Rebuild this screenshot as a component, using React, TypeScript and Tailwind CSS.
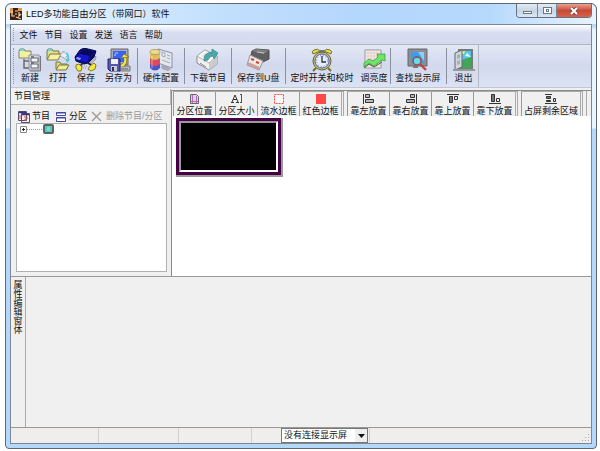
import React from 'react';

type Item = { label: string; icon: React.ReactNode; pad?: string; sep?: boolean };

const Svg = ({ children }: { children: React.ReactNode }) => (
  <svg className="w-6 h-6" viewBox="0 0 24 24" aria-hidden="true">{children}</svg>
);

const NewIcon = () => (
  <Svg>
    <path d="M1 3l1-2h4l1 2h6v7H1z" fill="#f3f1a4" stroke="#82825a" />
    <path d="M2 1h4v2H2z" fill="#67d7e4" />
    <path d="M6 11v9h5M6 13h5" fill="none" stroke="#666" strokeWidth="1.4" />
    <path d="M11 7h10v15H11z" fill="#d7dbea" stroke="#8c8f9c" />
    <path d="M13 10h7v4h-7zM13 16h7v4h-7z" fill="#f2f4fb" stroke="#666" />
    <path d="M13 9h3M13 15h3" stroke="#666" strokeWidth="1.4" />
    <path d="M22.5 8v15H12" fill="none" stroke="#777" />
  </Svg>
);

const OpenIcon = () => (
  <Svg>
    <path d="M1 11V3l1-2h4l1 2h6v3" fill="#e4e08a" stroke="#77774a" />
    <path d="M2 1h4v2H2z" fill="#67d7e4" />
    <path d="M1 12l3-6h11l-3 6z" fill="#f6f2a0" stroke="#77774a" />
    <path d="M10 21v-7h4l1 2h6v5z" fill="#dcd878" stroke="#77774a" />
    <path d="M10 22l3-5h10l-3 5z" fill="#f0ec90" stroke="#77774a" />
    <path d="M14 6l3-1V3l5 4-4 4-1-2h-2z" fill="#e8ecf4" stroke="#888" strokeWidth=".8" strokeDasharray="2 1" />
    <path d="M20 5q3 2 2 7" fill="none" stroke="#49c8dc" strokeWidth="1.6" />
    <path d="M19 11h5l-2.5 4z" fill="#49c8dc" />
  </Svg>
);

const SaveIcon = () => (
  <Svg>
    <path d="M15 14l7-6v3l-5 5z" fill="#b4b4c0" stroke="#888" strokeDasharray="1 1" />
    <path d="M1 9l5-7 4-2 12 3-2 6-6 6-4 1-8-3z" fill="#10109c" stroke="#04043c" />
    <path d="M7 3l3-2 11 3-5 4-10-2z" fill="#080858" />
    <path d="M3 9l3-3 9 2-2 6-11-3z" fill="#1717c8" />
    <path d="M16 8l5-3-2 5-5 4z" fill="#0b0b78" />
    <path d="M3 9l4 1-1 2-4-1z" fill="#86a8ff" />
    <path d="M9 15l-3 3M14 15l3 2" stroke="#222" strokeWidth="1.6" />
    <path d="M8 18h5M9 20h3" stroke="#999" strokeDasharray="1 1" />
    <path d="M2 17l3-1 3 3-1 4H4l-2-3z" fill="#f6ea3c" stroke="#5f5a22" strokeWidth=".8" />
    <path d="M14 21l2-3 4-3 2 2-1 4-4 2z" fill="#f6ea3c" stroke="#5f5a22" strokeWidth=".8" />
  </Svg>
);

const SaveAsIcon = () => (
  <Svg>
    <path d="M4 1h17v16H4z" fill="#a9acb6" stroke="#666" />
    <path d="M6 3h13v11H6z" fill="#3a62f4" />
    <path d="M8 5h3M7 7h2" stroke="#bcd7ff" />
    <path d="M12 18h11v5H12z" fill="#b9b9bd" stroke="#777" />
    <path d="M14 21h7" stroke="#666" />
    <path d="M1 11h12v12H3l-2-2z" fill="#5557b0" stroke="#262669" />
    <path d="M4 11h7v5H4z" fill="#eef0fa" />
    <path d="M4 18h6v5H4z" fill="#c9cbd8" />
    <path d="M5 19h2v4H5z" fill="#333" />
    <path d="M14 18q6-2 4-9" fill="none" stroke="#6e6a22" strokeWidth="3.4" />
    <path d="M14 18q6-2 4-9" fill="none" stroke="#f5e74c" strokeWidth="2.2" />
    <path d="M14 10l3-4 5 3z" fill="#f5e74c" stroke="#6e6a22" strokeWidth=".7" />
  </Svg>
);

const HardwareIcon = () => (
  <Svg>
    <path d="M9 1l14 4v15l-14-5z" fill="#e3e8ef" stroke="#8b90a0" />
    <path d="M13 4l3 1v4l-3-1zM18 7l3 1M18 10l3 1M13 12l8 3" fill="none" stroke="#a3abb9" />
    <path d="M1 5v15q5 5 10 0V5z" fill="#5053c8" />
    <path d="M1 9v7q5 4 10 0V9z" fill="#dd4a5e" />
    <path d="M1 4v6q5 4 10 0V4z" fill="#d8bf62" />
    <ellipse cx="6" cy="4" rx="5" ry="2.5" fill="#efdc84" stroke="#a08b50" strokeWidth=".7" />
    <path d="M3 8v12" stroke="#fff" strokeWidth="1.3" opacity=".35" />
    <path d="M12 18l3-1 7 4-3 2-6-2z" fill="#a8a5b4" />
  </Svg>
);

const DownloadIcon = () => (
  <Svg>
    <path d="M1 8l8-6 12 6v8l-8 6L1 15z" fill="#f0f0f0" stroke="#8d8d8d" />
    <path d="M1 8l8-6 12 6-8 7z" fill="#fcfcfc" stroke="#b0b0b0" />
    <path d="M5 8l5-4 7 4-5 4z" fill="#e2e2e2" />
    <path d="M13 15v7l8-6V8z" fill="#cbcbcb" />
    <path d="M4 15l6 4" stroke="#888" />
    <path d="M8 13q-1-8 8-9V1l6 4-4 6-1-3q-4 0-5 4z" fill="#47aaa9" stroke="#267c7f" strokeWidth=".6" />
  </Svg>
);

const UsbIcon = () => (
  <Svg>
    <path d="M6 3l4-2 13 1v9l-6 3L5 7z" fill="#5f5f62" stroke="#4b4b4d" />
    <path d="M6 3l4-2 13 1-5 4z" fill="#7d7d80" />
    <path d="M11 4l7 1" stroke="#c8c8c8" />
    <path d="M4 7l13 6-4 9-12-5z" fill="#ebe8e8" stroke="#9a9292" />
    <path d="M1 17l12 5 1-3-12-5z" fill="#c9a29c" />
    <path d="M5 11l3 1M10 14l3 1" stroke="#d4452d" strokeWidth="2" />
  </Svg>
);

const ClockIcon = () => (
  <Svg>
    <path d="M6 20l-3 3M18 20l3 3" stroke="#756e2c" strokeWidth="2" />
    <path d="M3 6Q1 3 4 2q4-2 6 1zM21 6q2-3-1-4-4-2-6 1z" fill="#e9dd4c" stroke="#777133" />
    <path d="M10 2h4v3h-4z" fill="#777" />
    <circle cx="12" cy="13" r="9" fill="#c9c06a" stroke="#66623b" />
    <circle cx="12" cy="13" r="7" fill="#e6eeff" stroke="#5160b2" />
    <circle cx="12" cy="13" r="5.5" fill="none" stroke="#547bc9" strokeDasharray="1 1.9" />
    <path d="M12 8v6h4" fill="none" stroke="#333" strokeWidth="1.3" />
  </Svg>
);

const BrightnessIcon = () => (
  <Svg>
    <path d="M3 2h16v18H3z" fill="#f7f1ee" stroke="#999" />
    <path d="M6 2v18M9 2v18M12 2v18M15 2v18M3 5h16M3 8h16M3 11h16M3 14h16M3 17h16" stroke="#e0bdb9" strokeWidth=".7" />
    <path d="M2 15l5-4 4 2 5-4-1-3h8v7l-3-1-8 6-5-3-5 4z" fill="#6de565" stroke="#3c8f40" strokeWidth=".7" />
    <path d="M2 20l5-4 5 3 8-5" fill="none" stroke="#46604a" />
  </Svg>
);

const FindIcon = () => (
  <Svg>
    <path d="M2 1h19v17H2z" fill="#8b8e93" stroke="#66696e" />
    <path d="M5 4h13v11H5z" fill="#3c9cf0" />
    <path d="M12 4h6v9z" fill="#8fccff" />
    <circle cx="11" cy="13" r="4" fill="#64dce0" stroke="#964b4b" strokeWidth="1.5" />
    <path d="M14 16l6 6" stroke="#bd4543" strokeWidth="2.4" />
    <path d="M7 19h5" stroke="#777" strokeWidth="2" />
  </Svg>
);

const ExitIcon = () => (
  <Svg>
    <path d="M6 1h15v20H6z" fill="#747b7c" />
    <path d="M8 3h11v17H8z" fill="#50c8ef" />
    <path d="M8 14l4-3 7-2v11H8z" fill="#42a657" />
    <path d="M9 3h4l-1 3H9z" fill="#f7ed64" />
    <path d="M13 8l2-3 4 4z" fill="#eafcff" />
    <path d="M3 5l7-3v17l-7 3z" fill="#d1d7db" stroke="#667" />
    <path d="M5 7l3-1v4l-3 1zM5 13l3-1v4l-3 1z" fill="#a9b1b8" />
    <path d="M1 22h22" stroke="#999" strokeWidth="2" />
  </Svg>
);

const toolbar: Item[] = [
  { label: '新建', icon: <NewIcon />, pad: 'px-[2px]' },
  { label: '打开', icon: <OpenIcon />, pad: 'px-[2px]' },
  { label: '保存', icon: <SaveIcon />, pad: 'px-[2px]' },
  { label: '另存为', icon: <SaveAsIcon />, sep: true },
  { label: '硬件配置', icon: <HardwareIcon />, sep: true },
  { label: '下载节目', icon: <DownloadIcon />, sep: true },
  { label: '保存到U盘', icon: <UsbIcon />, sep: true },
  { label: '定时开关和校时', icon: <ClockIcon /> },
  { label: '调亮度', icon: <BrightnessIcon />, pad: 'px-[2px]', sep: true },
  { label: '查找显示屏', icon: <FindIcon />, sep: true },
  { label: '退出', icon: <ExitIcon />, pad: 'pl-[5px] pr-[2px]' },
];

const Small = ({ children }: { children: React.ReactNode }) => (
  <svg className="w-3 h-3 shrink-0" viewBox="0 0 12 12" aria-hidden="true">{children}</svg>
);

const groups: Item[][] = [
  [
    {
      label: '分区位置',
      icon: <Small><path d="M1.5 1.5h6l2 2v7h-8z" fill="#e6cdea" stroke="#666" /><path d="M3.5 2v8M7.5 3v7M2 8.5h7" stroke="#b06cb8" /></Small>,
    },
    {
      label: '分区大小',
      icon: (
        <Small>
          <path d="M1 9L4 2l3 7M2 6.5h4M0 9.5h3M5 9.5h3" fill="none" stroke="#333" />
          <path d="M9 1.5h2M10.5 2v7M9 9.5h2" stroke="#555" />
        </Small>
      ),
    },
    {
      label: '流水边框',
      icon: <Small><path d="M1.5 1.5h9v9h-9z" fill="#fff8f8" stroke="#ed4b4b" strokeDasharray="2 1" /></Small>,
    },
    { label: '红色边框', icon: <Small><path d="M1 1h10v10H1z" fill="#ff4848" /></Small> },
  ],
  [
    {
      label: '靠左放置',
      icon: <Small><path d="M.5 1v10" stroke="#333" /><path d="M2.5 1.5h4v3h-4zM2.5 6.5h8v3h-8z" fill="#bbb" stroke="#333" /></Small>,
    },
    {
      label: '靠右放置',
      icon: <Small><path d="M11.5 1v10" stroke="#333" /><path d="M5.5 1.5h4v3h-4zM1.5 6.5h8v3h-8z" fill="#bbb" stroke="#333" /></Small>,
    },
    {
      label: '靠上放置',
      icon: <Small><path d="M0 1.5h12" stroke="#333" /><path d="M2.5 3.5h3v6h-3z" fill="#777" stroke="#333" /><path d="M7.5 3.5h3v3h-3z" fill="#eee" stroke="#333" /></Small>,
    },
    {
      label: '靠下放置',
      icon: <Small><path d="M0 10.5h12" stroke="#333" /><path d="M2.5 1.5h3v7h-3z" fill="#777" stroke="#333" /><path d="M7.5 5.5h3v3h-3z" fill="#eee" stroke="#333" /></Small>,
    },
  ],
  [
    {
      label: '占屏剩余区域',
      icon: (
        <Small>
          <path d="M0 1.5h7M0 10.5h12" stroke="#333" />
          <path d="M1.5 3.5h4v2h-4zM1.5 7.5h4v1h-4z" fill="#777" stroke="#333" />
          <path d="M8.5 5.5h2v3h-2z" fill="#ddd" stroke="#333" />
        </Small>
      ),
    },
  ],
];

const Grip = () => <span className="w-px my-[3px] mx-[2px] border-l border-dotted border-[#8e94a8]" />;

export default function App() {
  return (
    <div
      lang="zh-CN"
      className="min-h-screen bg-white pt-[3px] pl-[5px] pr-[3px] pb-[2px] flex flex-col text-[9px] leading-[11px] text-[#111] font-['Liberation_Sans','Noto_Sans_CJK_SC',sans-serif]"
    >
      <div className="flex-1 flex flex-col rounded-t-md rounded-b-sm border border-[#5d6872] bg-[linear-gradient(to_bottom,#b7d9fc_0,#b7d9fc_22px,#eaf4fc_26px,#eaf4fc_124px,#b4d8fa_125px)] px-1 pb-1">
        {/* Title bar */}
        <header className="h-5 flex items-start bg-[linear-gradient(to_right,#f0f7ff,#c3e0fd_35%,#b4d7fc_60%,#b7d9fc_82%,#e8f3fe)] -mx-1 px-1 rounded-t-md">
          <svg className="w-3 h-3 mt-1 mr-1" viewBox="0 0 12 12" aria-hidden="true">
            <path d="M0 0h12v12H0z" fill="#3b2013" />
            <path d="M0 0h3v5H0zM8 0h4v3H8z" fill="#e59a49" />
            <path d="M2 3v5h3M5 3h3M5 6h2M9 4v4l2-2M6 9l5 2" fill="none" stroke="#f3d5a5" strokeWidth="1.2" />
          </svg>
          <h1 className="flex-1 mt-1 leading-3">LED多功能自由分区（带网口）软件</h1>
          <div className="flex h-[14px] border border-t-0 border-[#65717e] rounded-b overflow-hidden">
            <button aria-label="最小化" className="w-[21px] flex items-center justify-center border-r border-[#7c8998] bg-linear-to-b from-[#e4edf7] via-[#c6d4e3] to-[#d8e7f5]">
              <span className="w-[9px] h-[3px] mt-1 border border-[#6d7784] bg-white" />
            </button>
            <button aria-label="最大化" className="w-[19px] flex items-center justify-center border-r border-[#7c8998] bg-linear-to-b from-[#e4edf7] via-[#c6d4e3] to-[#d8e7f5]">
              <span className="w-[9px] h-[7px] border border-[#6d7784] bg-white flex items-center justify-center">
                <span className="w-[3px] h-[3px] border border-[#6d7784]" />
              </span>
            </button>
            <button aria-label="关闭" className="w-[34px] flex items-center justify-center bg-linear-to-b from-[#e7a293] via-[#c64a36] to-[#d7614a]">
              <svg className="w-[10px] h-2" viewBox="0 0 10 8">
                <path d="M2 1l6 6M8 1L2 7" stroke="#5c4650" strokeWidth="3.4" />
                <path d="M2 1l6 6M8 1L2 7" stroke="#fff" strokeWidth="2" />
              </svg>
            </button>
          </div>
        </header>

        <main className="flex-1 flex flex-col border border-[#7b8794] bg-[#f0f0f0]">
          {/* Menu */}
          <nav className="h-5 flex items-stretch bg-linear-to-b from-white via-[#d8def0] via-40% to-[#d4daed] border-b border-[#b4b6bd]">
            <Grip />
            <div className="flex items-center pt-[2px]">
              {['文件', '节目', '设置', '发送', '语言', '帮助'].map((m) => (
                <button key={m} className="w-[25px] whitespace-nowrap">{m}</button>
              ))}
            </div>
          </nav>

          {/* Main toolbar */}
          <div className="h-[43px] flex bg-linear-to-b from-[#e3e8f6] via-[#d2d9ed] to-[#dce3f4] border-b border-[#c2c7d6]">
            <div className="flex border-r border-[#b3b7c2] shrink-0">
              <Grip />
              {toolbar.map((t) => (
                <React.Fragment key={t.label}>
                  <button className={`${t.pad ?? 'px-[5px]'} flex flex-col items-center pt-[3px] gap-px whitespace-nowrap`}>
                    {t.icon}
                    <span>{t.label}</span>
                  </button>
                  {t.sep && <span className="w-px my-[3px] bg-[#8b90a0]" />}
                </React.Fragment>
              ))}
            </div>
          </div>

          {/* Programs and canvas */}
          <div className="h-[189px] flex border-b border-[#999]">
            <aside className="w-40 shrink-0 flex flex-col">
              <h2 className="h-4 mt-px pl-[3px] flex items-center border-r border-b border-[#b4b4b4] bg-[#f2f2f2]">节目管理</h2>
              <div className="flex items-center mt-[5px] pl-[7px] h-[13px] whitespace-nowrap">
                <button className="flex items-center gap-[2px]">
                  <Small>
                    <path d="M.5.5h8v9h-8zM3.5 2.5h8v9h-8z" fill="#f4eef0" stroke="#554d75" />
                    <path d="M1 1.5h7M4 3.5h7" stroke="#32347e" strokeWidth="1.5" />
                    <path d="M2 4v4M6 6h3v2H7v2" fill="none" stroke="#cf4b4b" />
                  </Small>
                  节目
                </button>
                <button className="flex items-center gap-[2px] ml-[5px]">
                  <Small><path d="M1.5 1.5h9v3h-9zM1.5 6.5h9v4h-9z" fill="#fff" stroke="#4447a5" /><path d="M1 2h10M1 7h10" stroke="#4447a5" /></Small>
                  分区
                </button>
                <button disabled className="flex items-center gap-[3px] ml-1 text-[#9a9a9a]">
                  <Small><path d="M1 1l9 9M10 1l-9 9" stroke="#999" strokeWidth="1.3" /></Small>
                  删除节目/分区
                </button>
              </div>
              <div className="flex-1 ml-[5px] mr-1 mb-1 border border-[#b0b0b0] bg-white pl-[3px]">
                <button aria-label="展开" className="flex items-center h-[11px]">
                  <svg className="w-[34px] h-[11px]" viewBox="0 0 34 11">
                    <path d="M.5 2.5h6v6h-6z" fill="#fff" stroke="#888" />
                    <path d="M2 5.5h3M3.5 4v3" stroke="#222" />
                    <path d="M7 5.5h16" stroke="#999" strokeDasharray="1 1" />
                    <rect x="23" y="0" width="11" height="10" rx="2" fill="#5c6463" />
                    <path d="M25 2h7v6h-7z" fill="#52c9bd" />
                    <path d="M27 4h3M27 6h3" stroke="#a2eee5" />
                  </svg>
                </button>
              </div>
            </aside>

            <section className="flex-1 min-w-0 mt-[2px] border-t border-l border-[#8a8a8a] bg-white">
              <div className="h-[25px] flex overflow-hidden bg-[#f0f0f0] whitespace-nowrap pl-px">
                {groups.map((g) => (
                  <div key={g[0].label} className="flex border-t border-r border-[#aaa] mr-[3px] shrink-0">
                    {g.map((b) => (
                      <button key={b.label} className="px-[2px] border-l border-[#999] flex flex-col items-center pt-px gap-px min-w-[42px]">
                        {b.icon}
                        <span>{b.label}</span>
                      </button>
                    ))}
                    <span className="w-[2px] border-l border-[#aaa]" />
                  </div>
                ))}
                <span className="border-l border-[#aaa]" />
              </div>
              <div className="ml-1 mt-[2px] w-[107px] h-[59px] bg-[#460046] border-r-2 border-b-2 border-[#9a9a9a] p-[3px] flex">
                <div className="flex-1 bg-black border-2 border-t-[#999] border-l-[#999] border-r-white border-b-white" />
              </div>
            </section>
          </div>

          {/* Property editor */}
          <div className="flex-1 flex min-h-[120px]">
            <div className="w-[15px] flex justify-center border-r border-[#aaa] pt-1">
              <h2 className="w-[9px] leading-[9px] break-all">属性编辑窗体</h2>
            </div>
            <div className="flex-1" />
          </div>

          {/* Status bar */}
          <footer className="h-4 flex border-t border-[#999] bg-[#f0eded]">
            <span className="w-[88px] border-r border-[#d2d0d0]" />
            <span className="w-20 border-r border-[#d2d0d0]" />
            <span className="w-[73px] border-r border-[#d2d0d0]" />
            <select
              aria-label="显示屏"
              className="ml-[29px] w-[87px] pl-[2px] appearance-none border border-[#777] bg-white bg-[linear-gradient(#eee,#eee)] bg-no-repeat bg-right bg-[length:12px_100%]"
            >
              <option>没有连接显示屏</option>
            </select>
            <svg className="w-[10px] h-[15px] -ml-[11px] pointer-events-none" viewBox="0 0 10 15">
              <path d="M1 6h7l-3.5 4z" fill="#111" />
            </svg>
            <span className="ml-[2px] border-l border-[#d2d0d0] flex-1" />
            <svg className="w-[10px] h-[10px] self-end" viewBox="0 0 10 10">
              <path d="M7 1h1v1H7zM7 4h1v1H7zM7 7h1v1H7zM4 4h1v1H4zM4 7h1v1H4zM1 7h1v1H1z" fill="#aaa" />
            </svg>
          </footer>
        </main>
      </div>
    </div>
  );
}
